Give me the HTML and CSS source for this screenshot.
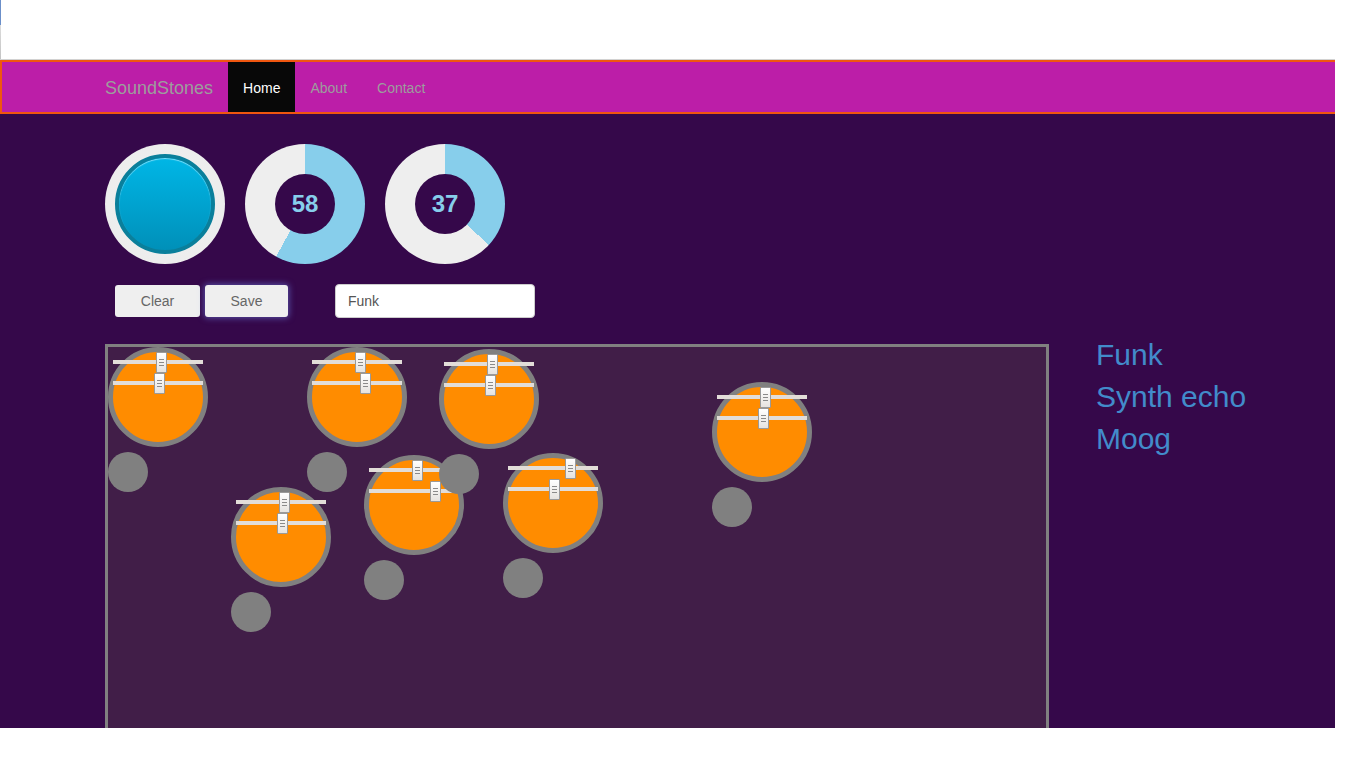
FILE: index.html
```html
<!DOCTYPE html>
<html lang="en">
<head>
<meta charset="utf-8">
<title>SoundStones</title>
<link rel="stylesheet" href="styles.css">
</head>
<body>
<div class="frame">
  <div class="topbar"></div>
  <nav class="navbar">
    <a class="brand" href="#">SoundStones</a>
    <ul class="nav">
      <li class="active"><a href="#">Home</a></li>
      <li><a href="#">About</a></li>
      <li><a href="#">Contact</a></li>
    </ul>
  </nav>
  <main class="content">
    <section class="workspace">
      <div class="dials">
        <div class="knob"><div class="knob-face"></div></div>
        <div class="donut" style="--p:58%"><div class="donut-hole">58</div></div>
        <div class="donut" style="--p:37%"><div class="donut-hole">37</div></div>
      </div>
      <div class="controls">
        <button class="btn">Clear</button>
        <button class="btn focused">Save</button>
        <input class="name-input" type="text" value="Funk">
      </div>
      <div class="board">
        <div class="stone" style="left:0px;top:0px">
          <div class="disc"></div>
          <div class="bar bar1"></div><div class="bar bar2"></div>
          <div class="thumb thumb1" style="left:48px"></div>
          <div class="thumb thumb2" style="left:46px"></div>
          <div class="dot"></div>
        </div>
        <div class="stone" style="left:199px;top:0px">
          <div class="disc"></div>
          <div class="bar bar1"></div><div class="bar bar2"></div>
          <div class="thumb thumb1" style="left:48px"></div>
          <div class="thumb thumb2" style="left:53px"></div>
          <div class="dot"></div>
        </div>
        <div class="stone" style="left:123px;top:140px">
          <div class="disc"></div>
          <div class="bar bar1"></div><div class="bar bar2"></div>
          <div class="thumb thumb1" style="left:48px"></div>
          <div class="thumb thumb2" style="left:46px"></div>
          <div class="dot"></div>
        </div>
        <div class="stone" style="left:256px;top:108px">
          <div class="disc"></div>
          <div class="bar bar1"></div><div class="bar bar2"></div>
          <div class="thumb thumb1" style="left:48px"></div>
          <div class="thumb thumb2" style="left:66px"></div>
          <div class="dot"></div>
        </div>
        <div class="stone" style="left:331px;top:2px">
          <div class="disc"></div>
          <div class="bar bar1"></div><div class="bar bar2"></div>
          <div class="thumb thumb1" style="left:48px"></div>
          <div class="thumb thumb2" style="left:46px"></div>
          <div class="dot"></div>
        </div>
        <div class="stone" style="left:395px;top:106px">
          <div class="disc"></div>
          <div class="bar bar1"></div><div class="bar bar2"></div>
          <div class="thumb thumb1" style="left:62px"></div>
          <div class="thumb thumb2" style="left:46px"></div>
          <div class="dot"></div>
        </div>
        <div class="stone" style="left:604px;top:35px">
          <div class="disc"></div>
          <div class="bar bar1"></div><div class="bar bar2"></div>
          <div class="thumb thumb1" style="left:48px"></div>
          <div class="thumb thumb2" style="left:46px"></div>
          <div class="dot"></div>
        </div>
      </div>
    </section>
    <ul class="presets">
      <li>Funk</li>
      <li>Synth echo</li>
      <li>Moog</li>
    </ul>
  </main>
</div>
</body>
</html>
```

FILE: styles.css
```css
html, body {
  margin: 0;
  padding: 0;
  background: #ffffff;
}

body {
  font-family: "Liberation Sans", Arial, sans-serif;
  font-size: 14px;
}

.frame {
  width: 1335px;
  height: 728px;
  overflow: hidden;
  background: #35084a;
}

.topbar {
  height: 59px;
  border-bottom: 1px solid #d2d2d2;
  background:
    linear-gradient(#6b8fc9, #6b8fc9) 0 0 / 1px 25px no-repeat,
    linear-gradient(#dcdcdc, #c4c4c4) 0 25px / 1px 34px no-repeat,
    #ffffff;
}

.navbar {
  display: flex;
  align-items: stretch;
  height: 50px;
  padding-left: 88px;
  background: #bc1ea8;
  border: 2px solid #f0560f;
  border-right: none;
}

.brand {
  display: block;
  padding: 16px 15px 14px;
  font-size: 18px;
  line-height: 20px;
  color: #9d9d9d;
  text-decoration: none;
}

.nav {
  display: flex;
  margin: 0;
  padding: 0;
  list-style: none;
}

.nav a {
  display: block;
  padding: 16px 15px 14px;
  line-height: 20px;
  color: #9d9d9d;
  text-decoration: none;
}

.nav .active a {
  background: #080808;
  color: #ffffff;
}

.content {
  display: flex;
  align-items: flex-start;
  padding: 30px 0 0 105px;
  gap: 47px;
}

.workspace {
  display: flex;
  flex-direction: column;
}

.dials {
  display: flex;
  gap: 20px;
}

.knob {
  width: 120px;
  height: 120px;
  border-radius: 50%;
  background: radial-gradient(circle, #f2f2f2 0%, #ececec 80%, #dedede 100%);
  display: flex;
  align-items: center;
  justify-content: center;
}

.knob-face {
  width: 92px;
  height: 92px;
  border-radius: 50%;
  border: 4px solid #0a7f9b;
  background: linear-gradient(#00b6e6, #0090b9);
  box-shadow: inset 0 1px 1px rgba(140, 225, 250, 0.9);
}

.donut {
  width: 120px;
  height: 120px;
  border-radius: 50%;
  background: conic-gradient(#87ceeb 0 var(--p), #eeeeee var(--p) 100%);
  display: flex;
  align-items: center;
  justify-content: center;
}

.donut-hole {
  width: 60px;
  height: 60px;
  border-radius: 50%;
  background: #35084a;
  color: #87ceeb;
  font-weight: bold;
  font-size: 24px;
  display: flex;
  align-items: center;
  justify-content: center;
}

.controls {
  display: flex;
  align-items: center;
  height: 34px;
  margin-top: 20px;
  padding-left: 10px;
}

.btn {
  height: 32px;
  margin: 0 5px 0 0;
  border: none;
  border-radius: 3px;
  background: #efefef;
  color: #666666;
  font-family: inherit;
  font-size: 14px;
  padding: 0;
  width: 85px;
}

.btn.focused {
  width: 83px;
  box-shadow: 0 0 6px 1px rgba(120, 150, 255, 0.5);
}

.name-input {
  box-sizing: border-box;
  width: 200px;
  height: 34px;
  margin-left: 42px;
  padding: 0 12px;
  border: 1px solid #cccccc;
  border-radius: 4px;
  background: #ffffff;
  color: #555555;
  font-family: inherit;
  font-size: 14px;
}

.board {
  position: relative;
  box-sizing: border-box;
  width: 944px;
  height: 500px;
  margin-top: 26px;
  border: 3px solid #808080;
  background: #411e48;
}

.stone {
  position: absolute;
  width: 100px;
  height: 145px;
}

.disc {
  box-sizing: border-box;
  width: 100px;
  height: 100px;
  border-radius: 50%;
  border: 5px solid #808080;
  background: #ff8c00;
}

.bar {
  position: absolute;
  left: 5px;
  width: 90px;
  height: 4px;
  background: #e2ddd8;
}

.bar1 { top: 13px; }
.bar2 { top: 34px; }

.thumb {
  position: absolute;
  box-sizing: border-box;
  width: 11px;
  height: 21px;
  border: 1px solid #9a9a9a;
  border-radius: 1px;
  background:
    linear-gradient(#8a8a8a, #8a8a8a) 2px 6px / 5px 1px no-repeat,
    linear-gradient(#8a8a8a, #8a8a8a) 2px 9px / 5px 1px no-repeat,
    linear-gradient(#8a8a8a, #8a8a8a) 2px 12px / 5px 1px no-repeat,
    linear-gradient(#ffffff, #e6e3df);
}

.thumb1 { top: 5px; }
.thumb2 { top: 26px; }

.dot {
  position: relative;
  z-index: 2;
  width: 40px;
  height: 40px;
  margin-top: 5px;
  border-radius: 50%;
  background: #808080;
}

.presets {
  margin: 190px 0 0 0;
  padding: 0;
  list-style: none;
}

.presets li {
  font-size: 30px;
  line-height: 42px;
  color: #428bca;
}
```
